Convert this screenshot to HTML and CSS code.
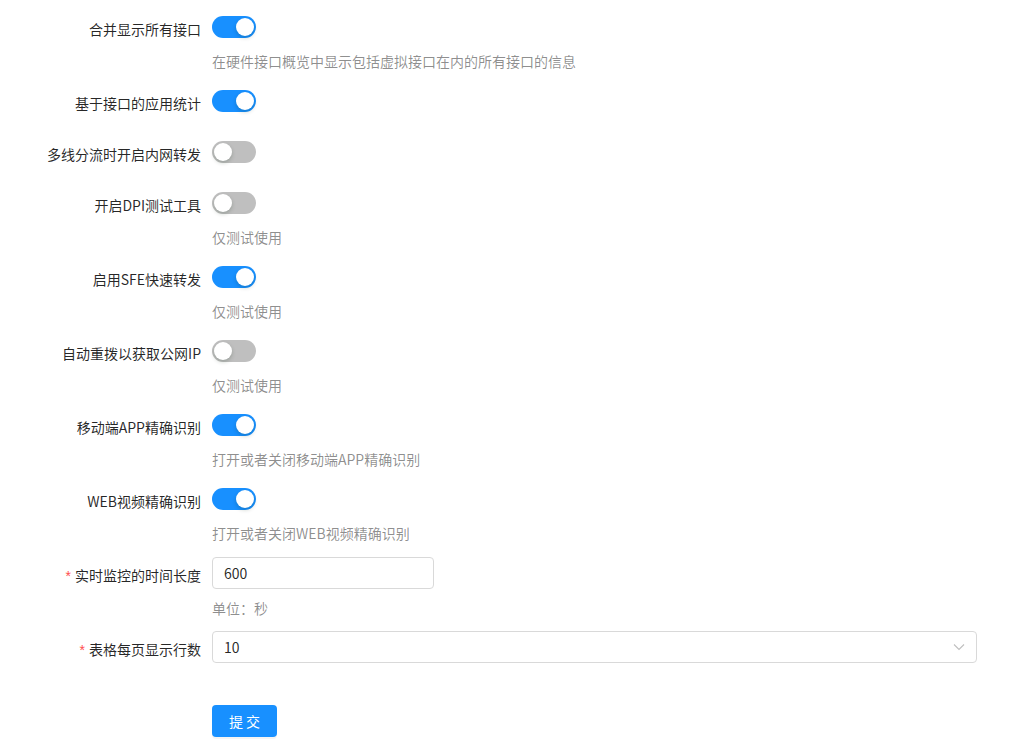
FILE: index.html
```html
<!DOCTYPE html>
<html lang="zh-CN">

<head>
  <meta charset="UTF-8" />
  <meta name="viewport" content="width=device-width, initial-scale=1.0" />
  <title>系统设置</title>
  <link rel="stylesheet" href="styles.css">
</head>

<body>
  <form class="form">
    <div class="item">
      <label class="label">合并显示所有接口</label>
      <div class="control">
        <span class="switch on"></span>
        <div class="extra">在硬件接口概览中显示包括虚拟接口在内的所有接口的信息</div>
      </div>
    </div>

    <div class="item">
      <label class="label">基于接口的应用统计</label>
      <div class="control"><span class="switch on"></span></div>
    </div>

    <div class="item">
      <label class="label">多线分流时开启内网转发</label>
      <div class="control"><span class="switch"></span></div>
    </div>

    <div class="item">
      <label class="label">开启DPI测试工具</label>
      <div class="control">
        <span class="switch"></span>
        <div class="extra">仅测试使用</div>
      </div>
    </div>

    <div class="item">
      <label class="label">启用SFE快速转发</label>
      <div class="control">
        <span class="switch on"></span>
        <div class="extra">仅测试使用</div>
      </div>
    </div>

    <div class="item">
      <label class="label">自动重拨以获取公网IP</label>
      <div class="control">
        <span class="switch"></span>
        <div class="extra">仅测试使用</div>
      </div>
    </div>

    <div class="item">
      <label class="label">移动端APP精确识别</label>
      <div class="control">
        <span class="switch on"></span>
        <div class="extra">打开或者关闭移动端APP精确识别</div>
      </div>
    </div>

    <div class="item">
      <label class="label">WEB视频精确识别</label>
      <div class="control">
        <span class="switch on"></span>
        <div class="extra">打开或者关闭WEB视频精确识别</div>
      </div>
    </div>

    <div class="item">
      <label class="label required">实时监控的时间长度</label>
      <div class="control">
        <input class="input" type="text" value="600">
        <div class="extra">单位：秒</div>
      </div>
    </div>

    <div class="item">
      <label class="label required">表格每页显示行数</label>
      <div class="control">
        <div class="select">
          <span>10</span>
          <svg class="arrow" width="12" height="12" viewBox="0 0 12 12">
            <path d="M1 3.5 L6 8.5 L11 3.5" fill="none" stroke="#bfbfbf" stroke-width="1.1" />
          </svg>
        </div>
      </div>
    </div>

    <div class="item submit">
      <div class="label"></div>
      <div class="control"><button class="button" type="button">提 交</button></div>
    </div>
  </form>
</body>

</html>
```

FILE: styles.css
```css
body {
  margin: 0;
  font-family: "Noto Sans CJK SC", "Noto Sans", sans-serif;
  font-size: 14px;
  color: rgba(0, 0, 0, 0.85);
  background: #fff;
}

.form {
  padding-top: 11px;
  width: 977px;
}

.item {
  display: flex;
  margin-bottom: 19px;
}

.label {
  width: 212px;
  flex-shrink: 0;
  box-sizing: border-box;
  padding-right: 11px;
  text-align: right;
  line-height: 32px;
  height: 32px;
  padding-top: 2px;
  white-space: nowrap;
}

.label.required::before {
  content: "*";
  color: #ff4d4f;
  font-family: "Liberation Sans", sans-serif;
  font-size: 14px;
  margin-right: 4px;
}

.control {
  flex: 1;
  min-height: 32px;
}

.switch {
  display: block;
  position: relative;
  width: 44px;
  height: 22px;
  margin-top: 5px;
  border-radius: 11px;
  background: #bfbfbf;
}

.switch::after {
  content: "";
  position: absolute;
  top: 2px;
  left: 2px;
  width: 18px;
  height: 18px;
  border-radius: 50%;
  background: #fff;
  box-shadow: 0 2px 4px rgba(0, 35, 11, 0.2);
}

.switch.on {
  background: #1890ff;
}

.switch.on::after {
  left: 24px;
}

.switch + .extra {
  margin-top: 12px;
  margin-bottom: -6px;
}

.extra {
  margin-top: 8px;
  margin-bottom: -7px;
  line-height: 22px;
  color: rgba(0, 0, 0, 0.45);
}

.input {
  display: block;
  box-sizing: border-box;
  width: 222px;
  height: 32px;
  padding: 4px 11px;
  border: 1px solid #d9d9d9;
  border-radius: 4px;
  font-family: inherit;
  font-size: 14px;
  color: rgba(0, 0, 0, 0.85);
  outline: none;
}

.select {
  display: flex;
  align-items: center;
  justify-content: space-between;
  box-sizing: border-box;
  height: 32px;
  padding: 0 11px;
  border: 1px solid #d9d9d9;
  border-radius: 4px;
}

.submit {
  margin-top: 42px;
}

.button {
  height: 32px;
  width: 65px;
  padding: 0;
  border: none;
  border-radius: 4px;
  background: #1890ff;
  color: #fff;
  font-family: inherit;
  font-size: 14px;
  box-shadow: 0 2px 0 rgba(0, 0, 0, 0.045);
}
```
